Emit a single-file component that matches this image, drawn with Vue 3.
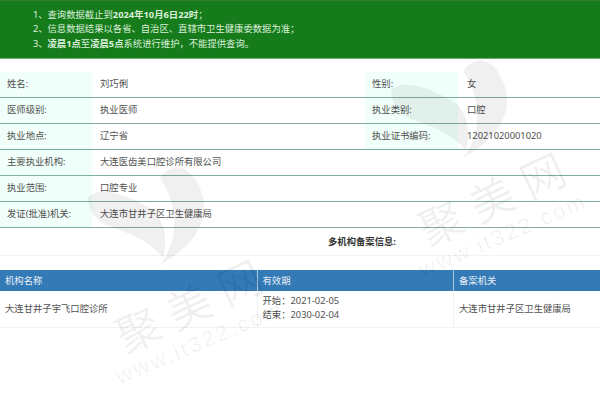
<script setup>
const notices = [
  [{ t: '查询数据截止到' }, { t: '2024年10月6日22时', b: true }, { t: '\uFF1B' }],
  [{ t: '信息数据结果以各省、自治区、直辖市卫生健康委数据为准\uFF1B' }],
  [{ t: '凌晨1点', b: true }, { t: '至' }, { t: '凌晨5点', b: true }, { t: '系统进行维护\uFF0C不能提供查询。' }]
]
const pairs = [
  ['姓名:', '刘巧俐', '性别:', '女'],
  ['医师级别:', '执业医师', '执业类别:', '口腔'],
  ['执业地点:', '辽宁省', '执业证书编码:', '12021020001020']
]
const singles = [
  ['主要执业机构:', '大连医齿美口腔诊所有限公司'],
  ['执业范围:', '口腔专业'],
  ['发证(批准)机关:', '大连市甘井子区卫生健康局']
]
const dates = ['开始\uFF1A2021-02-05', '结束\uFF1A2030-02-04']
const marks = [
  { x: 0, y: 0 },
  { x: 303, y: -107 }
]
function markStyle(m) {
  return { transform: `translate(${m.x}px, ${m.y}px)` }
}
</script>

<template>
  <div class="page">
    <div class="notice">
      <div v-for="(line, i) in notices" :key="i" class="notice-line">
        <span class="num">{{ i + 1 }}、</span>
        <span v-for="(p, j) in line" :key="j" :class="{ strong: p.b }">{{ p.t }}</span>
      </div>
    </div>

    <table class="info">
      <colgroup>
        <col class="c1" /><col class="c2" /><col class="c3" /><col />
      </colgroup>
      <tbody>
        <tr v-for="row in pairs" :key="row[0]">
          <td class="label">{{ row[0] }}</td>
          <td>{{ row[1] }}</td>
          <td class="label">{{ row[2] }}</td>
          <td class="val2">{{ row[3] }}</td>
        </tr>
        <tr v-for="row in singles" :key="row[0]">
          <td class="label">{{ row[0] }}</td>
          <td colspan="3">{{ row[1] }}</td>
        </tr>
      </tbody>
    </table>

    <div class="multi">多机构备案信息:</div>

    <table class="records">
      <colgroup>
        <col class="r1" /><col class="r2" /><col />
      </colgroup>
      <thead>
        <tr>
          <th>机构名称</th>
          <th>有效期</th>
          <th>备案机关</th>
        </tr>
      </thead>
      <tbody>
        <tr>
          <td>大连甘井子宇飞口腔诊所</td>
          <td class="dates">
            <div v-for="d in dates" :key="d">{{ d }}</div>
          </td>
          <td>大连市甘井子区卫生健康局</td>
        </tr>
      </tbody>
    </table>

    <div class="overlay">
      <div v-for="(m, i) in marks" :key="i" class="mark" :style="markStyle(m)">
        <svg class="tooth" width="600" height="410" viewBox="0 0 600 410">
          <path d="M160 178C170 163 192 160 203 197C208 222 195 245 160 265C176 245 182 210 160 178Z" />
          <path d="M88 197C100 186 125 193 153 210C165 222 168 240 163 258C150 240 125 232 108 226C95 220 88 210 88 197Z" />
        </svg>
        <span class="wm-cn">聚美网</span>
        <span class="wm-en">www.it322.com</span>
      </div>
    </div>
  </div>
</template>

<style scoped>
.page {
  position: relative;
  width: 600px;
  height: 410px;
  overflow: hidden;
  background: #fff;
  font-family: "Noto Sans", "Noto Sans CJK SC", sans-serif;
  font-size: 9.33px;
  color: #505050;
}
.notice {
  box-sizing: border-box;
  height: 59px;
  padding: 6.5px 0 0 33px;
  background: #167c1b;
  border-top: 1px solid #2f7f32;
  border-bottom: 1px solid #6fae72;
  color: #dcefdc;
}
.notice-line {
  height: 14.5px;
  line-height: 14.5px;
  white-space: nowrap;
}
.num {
  display: inline-block;
  width: 14.5px;
}
.strong {
  font-weight: 700;
}
.info {
  width: 600px;
  margin-top: 13px;
  border-collapse: collapse;
  table-layout: fixed;
}
.c1 { width: 92px; }
.c2 { width: 273px; }
.c3 { width: 93px; }
.info td {
  height: 26px;
  box-sizing: border-box;
  padding: 0 0 2px 8px;
  border-bottom: 1px solid #7fb09c;
}
.info tr:first-child td {
  height: 25px;
}
.info td.label {
  padding-left: 7px;
  background: #f0fffa;
}
.info td.val2 {
  padding-left: 9px;
}
.multi {
  box-sizing: border-box;
  height: 28px;
  padding: 7px 0 0 328px;
  line-height: 13px;
  font-weight: 700;
  color: #333;
  border-bottom: 1px solid #f2f2f2;
}
.records {
  width: 600px;
  margin-top: 14px;
  border-collapse: collapse;
  table-layout: fixed;
}
.r1 { width: 257px; }
.r2 { width: 196.5px; }
.records th {
  height: 21px;
  box-sizing: border-box;
  padding: 0 0 1px 5px;
  background: #337ab7;
  color: #e9f1f8;
  font-weight: 400;
  text-align: left;
  border-left: 1px solid #a9c8e0;
}
.records th:first-child {
  border-left: 0;
}
.records td {
  height: 37px;
  box-sizing: border-box;
  padding: 0 0 1px 5px;
  border-left: 1px solid #f0f0f0;
  border-bottom: 1px solid #f2f2f2;
}
.records td:first-child {
  border-left: 0;
}
.dates div {
  line-height: 14.5px;
}
.overlay {
  position: absolute;
  inset: 0;
  pointer-events: none;
}
.mark {
  position: absolute;
  inset: 0;
}
.tooth {
  position: absolute;
  left: 0;
  top: 0;
  fill: rgba(0, 0, 0, 0.06);
}
.wm-cn {
  position: absolute;
  left: 118px;
  top: 314px;
  font-size: 44px;
  line-height: 50px;
  letter-spacing: 12px;
  white-space: nowrap;
  color: rgba(0, 0, 0, 0.06);
  transform-origin: 0 50%;
  transform: rotate(-25deg);
}
.wm-en {
  position: absolute;
  left: 117px;
  top: 364px;
  font-family: "Liberation Sans", sans-serif;
  font-size: 22px;
  line-height: 28px;
  letter-spacing: 2.5px;
  white-space: nowrap;
  color: rgba(0, 0, 0, 0.06);
  transform-origin: 0 50%;
  transform: rotate(-23deg);
}
</style>
